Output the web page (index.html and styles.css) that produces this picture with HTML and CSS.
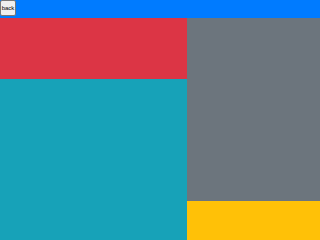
FILE: index.html
```html
<!DOCTYPE html>
<html>
<head>
<meta charset="utf-8">
<link rel="stylesheet" href="styles.css">
</head>
<body>
<div class="topbar"><button class="back">back</button></div>
<div class="main">
  <div class="left">
    <div class="red"></div>
    <div class="teal"></div>
  </div>
  <div class="right">
    <div class="gray"></div>
    <div class="yellow"></div>
  </div>
</div>
</body>
</html>
```
FILE: styles.css
```css
html, body { margin: 0; padding: 0; height: 100%; overflow: hidden; }
body { display: flex; flex-direction: column; height: 100vh; font-family: "Liberation Sans", Arial, sans-serif; }
.topbar { height: 7.306vh; background: #007bff; display: flex; align-items: flex-start; flex: none; }
.back { width: 5vw; height: 6.85vh; padding: 0; margin: 0; font-size: 6px; font-family: "Liberation Sans", Arial, sans-serif; background: #efefef; border: 1px solid #767676; border-radius: 2px; color: #000; line-height: 1; overflow: visible; }
.main { flex: 1; display: flex; }
.left { width: 58.333vw; display: flex; flex-direction: column; }
.right { flex: 1; display: flex; flex-direction: column; }
.red { height: 25.57vh; background: #dc3545; }
.teal { flex: 1; background: #17a2b8; }
.gray { height: 76.256vh; background: #6c757d; }
.yellow { flex: 1; background: #ffc107; }
```
